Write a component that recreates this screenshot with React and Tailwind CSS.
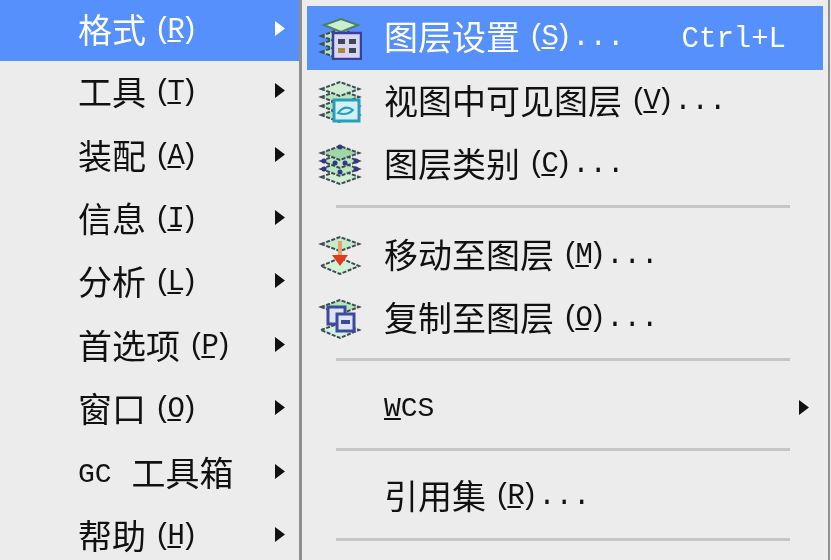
const leftItems = [
  { label: '格式', key: 'R', active: true },
  { label: '工具', key: 'T' },
  { label: '装配', key: 'A' },
  { label: '信息', key: 'I' },
  { label: '分析', key: 'L' },
  { label: '首选项', key: 'P' },
  { label: '窗口', key: 'O' },
  { prefix: 'GC', label: '工具箱' },
  { label: '帮助', key: 'H' },
];

// stack of flat layers, shared by all the layer icons
function Layer({ y, fill = '#b8e6c0' }) {
  return (
    <path
      d={`M3 ${y} L22 ${y - 7} L41 ${y} L22 ${y + 7} Z`}
      fill={fill}
      stroke="#3f4a55"
      strokeWidth="2"
      strokeDasharray="4 1.5"
    />
  );
}

function SettingsIcon() {
  return (
    <svg width="44" height="44" viewBox="0 0 44 44">
      <Layer y={36} />
      <Layer y={28} />
      <Layer y={20} />
      <path d="M6 9 L23 3 L40 9 L23 16 Z" fill="#c8f0d0" stroke="#4f7f62" strokeWidth="2" />
      <rect x="15" y="17" width="28" height="26" fill="#d9d6f5" stroke="#34409a" strokeWidth="2.5" />
      <rect x="20" y="23" width="7" height="5" fill="#3e4a52" />
      <rect x="31" y="23" width="7" height="5" fill="#3e4a52" />
      <rect x="20" y="32" width="7" height="5" fill="#a88a3a" />
      <rect x="31" y="32" width="7" height="5" fill="#3e4a52" />
    </svg>
  );
}

function VisibleIcon() {
  return (
    <svg width="44" height="44" viewBox="0 0 44 44">
      <Layer y={36} />
      <Layer y={27} />
      <Layer y={18} />
      <Layer y={10} fill="#cdeed3" />
      <rect x="16" y="21" width="25" height="21" fill="#d4f0f7" stroke="#2a9dbd" strokeWidth="3" />
      <path d="M20 34 Q27 25 35 31 Q29 37 20 34 Z" fill="none" stroke="#2a9dbd" strokeWidth="2" />
    </svg>
  );
}

function CategoryIcon() {
  return (
    <svg width="44" height="44" viewBox="0 0 44 44">
      <Layer y={34} fill="#cfeed4" />
      <Layer y={26} />
      <Layer y={18} />
      <Layer y={10} fill="#9ed6a8" />
      <g fill="#33348c">
        <circle cx="6" cy="18" r="2.5" />
        <circle cx="38" cy="18" r="2.5" />
        <circle cx="6" cy="26" r="2.5" />
        <circle cx="38" cy="26" r="2.5" />
        <circle cx="22" cy="4" r="2.5" />
        <circle cx="17" cy="20" r="2.5" />
        <circle cx="27" cy="20" r="2.5" />
        <circle cx="22" cy="29" r="2.5" />
      </g>
    </svg>
  );
}

function MoveIcon() {
  return (
    <svg width="44" height="44" viewBox="0 0 44 44">
      <Layer y={11} fill="#c4ecca" />
      <path d="M3 33 L22 25 L41 33 L22 41 Z" fill="#d4f2d8" stroke="#3f4a55" strokeWidth="2" strokeDasharray="4 1.5" />
      <rect x="20" y="8" width="4" height="16" fill="#e8a070" />
      <path d="M14 22 L30 22 L22 33 Z" fill="#e23b1c" />
    </svg>
  );
}

function CopyIcon() {
  return (
    <svg width="44" height="44" viewBox="0 0 44 44">
      <Layer y={10} fill="#b5e4bd" />
      <path d="M3 33 L22 26 L41 33 L22 41 Z" fill="#d4f2e0" stroke="#3f4a55" strokeWidth="2" strokeDasharray="4 1.5" />
      <rect x="10" y="10" width="17" height="17" fill="#dfe3f7" stroke="#3b4a9c" strokeWidth="3" />
      <rect x="19" y="17" width="17" height="17" fill="#dfe3f7" stroke="#3b4a9c" strokeWidth="3" />
      <rect x="23" y="23" width="9" height="4" fill="#3b4a9c" />
    </svg>
  );
}

function Arrow({ active }) {
  return (
    <svg width="10" height="15" viewBox="0 0 10 15" className="shrink-0">
      <path d="M0 0 L10 7.5 L0 15 Z" fill={active ? '#ffffff' : '#111111'} />
    </svg>
  );
}

function Mnemonic({ letter, dots }) {
  return (
    <span className="ml-[8px] font-['Liberation_Mono',monospace] text-[29px] flex items-center">
      <span className="tracking-[-4px]">
        (<span className="underline underline-offset-2">{letter}</span>)
      </span>
      {dots && <span className="ml-[4px]">...</span>}
    </span>
  );
}

function LeftRow({ item, first }) {
  return (
    <div
      className={`flex items-center pl-[78px] ${first ? 'h-[61px]' : 'h-[63.4px]'} ${item.active ? 'bg-[#5590fc] text-white' : 'text-[#111]'}`}
    >
      <div className="w-[197px] flex items-center whitespace-nowrap">
        {item.prefix && <span className="mr-[20px] pt-[3px] font-['Liberation_Mono',monospace] text-[28px]">{item.prefix}</span>}
        <span className="pb-[3px]">{item.label}</span>
        {item.key && <Mnemonic letter={item.key} />}
      </div>
      <div className="pb-[4px]">
        <Arrow active={item.active} />
      </div>
    </div>
  );
}

function MenuRow({ icon, label, letter, shortcut, active, arrow, children }) {
  return (
    <div className={`flex items-center h-[63.5px] pl-[11px] ${active ? 'bg-[#5590fc] text-white' : 'text-[#111]'}`}>
      <div className="w-[44px] h-[44px] shrink-0">{icon}</div>
      <div className="ml-[22px] flex items-center whitespace-nowrap flex-1">
        {children || (
          <>
            <span className="pb-[3px]">{label}</span>
            <Mnemonic letter={letter} dots />
          </>
        )}
      </div>
      {shortcut && <span className="mr-[37px] pt-[3px] font-['Liberation_Mono',monospace] text-[29px]">{shortcut}</span>}
      {arrow && <div className="mr-[14px]"><Arrow /></div>}
    </div>
  );
}

function Separator({ className }) {
  return <div className={`ml-[29px] w-[454px] h-[3px] bg-[#c6c6c6] ${className}`} />;
}

export default function App() {
  return (
    <div className="w-[831px] h-[560px] overflow-hidden flex bg-[#ececec] text-[34px] leading-none font-['Noto_Sans_CJK_SC',sans-serif] blur-[0.5px]">
      <div className="w-[299px] shrink-0">
        {leftItems.map((item, i) => (
          <LeftRow key={i} item={item} first={i === 0} />
        ))}
      </div>
      <div className="w-[3px] h-full bg-[#8e8e8e] shrink-0" />
      <div className="w-[526px] h-full shrink-0 pt-[6px] pl-[5px] pr-[5px]">
        <MenuRow icon={<SettingsIcon />} label="图层设置" letter="S" shortcut="Ctrl+L" active />
        <MenuRow icon={<VisibleIcon />} label="视图中可见图层" letter="V" />
        <MenuRow icon={<CategoryIcon />} label="图层类别" letter="C" />
        <Separator className="mt-[8px] mb-[16px]" />
        <MenuRow icon={<MoveIcon />} label="移动至图层" letter="M" />
        <MenuRow icon={<CopyIcon />} label="复制至图层" letter="O" />
        <Separator className="mt-[7px] mb-[15px]" />
        <MenuRow arrow>
          <span className="pt-[3px] font-['Liberation_Mono',monospace] text-[28px]">
            <span className="underline underline-offset-2">W</span>CS
          </span>
        </MenuRow>
        <Separator className="mt-[9px] mb-[14px]" />
        <MenuRow label="引用集" letter="R" />
        <Separator className="mt-[9px]" />
      </div>
      <div className="flex-1 h-full border-l-[2px] border-[#8e8e8e]" />
    </div>
  );
}
